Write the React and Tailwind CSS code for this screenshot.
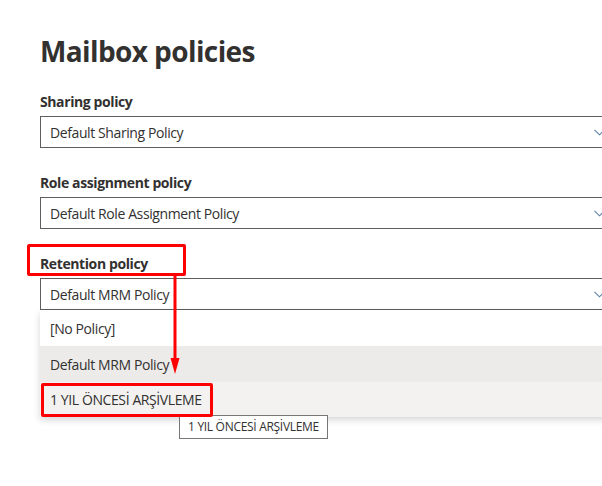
import React from 'react';

const font = { fontFamily: '"Open Sans", "Noto Sans", sans-serif' };

const Chevron = () => (
  <svg width="11" height="7" viewBox="0 0 11 7" fill="none" className="shrink-0">
    <path d="M0.5 0.8 L5.5 5.8 L10.5 0.8" stroke="#5b7fa6" strokeWidth="1.1" />
  </svg>
);

const Field = ({ label, value, first }) => (
  <div className={first ? 'mt-[23px]' : 'mt-[25px]'}>
    <div className="h-[20px] leading-[20px] text-[14px] font-bold tracking-[-0.4px] text-[#323130] mb-[4px]">{label}</div>
    <div className="w-[572px] h-[32px] border border-[#605e5c] flex items-center justify-between pl-[9px] pr-[6px]">
      <span className="text-[14px] tracking-[-0.4px] text-[#323130]">{value}</span>
      <Chevron />
    </div>
  </div>
);

export default function App() {
  return (
    <div className="relative w-[602px] h-[486px] overflow-hidden bg-white" style={font}>
      <div className="pl-[40px] pt-[33px]">
        <h1 className="text-[28px] leading-[36px] font-bold tracking-[-0.6px] text-[#323130]">Mailbox policies</h1>
        <Field first label="Sharing policy" value="Default Sharing Policy" />
        <Field label="Role assignment policy" value="Default Role Assignment Policy" />
        <Field label="Retention policy" value="Default MRM Policy" />

        {/* dropdown list */}
        <div className="w-[572px] bg-white shadow-[0_3px_7px_rgba(0,0,0,0.16)]">
          <div className="h-[36px] flex items-center pl-[10px] text-[14px] tracking-[-0.4px] text-[#323130]">[No Policy]</div>
          <div className="h-[36px] flex items-center pl-[10px] text-[14px] tracking-[-0.4px] text-[#323130] bg-[#edebe9]">Default MRM Policy</div>
          <div className="h-[35px] flex items-center pl-[10px] text-[14px] tracking-[-0.4px] text-[#323130] bg-[#f3f2f1]">1 YIL ÖNCESİ ARŞİVLEME</div>
        </div>
      </div>

      {/* tooltip */}
      <div className="absolute left-[179px] top-[415px] h-[24px] px-[8px] flex items-center bg-white border border-[#767676] text-[12px] tracking-[-0.3px] text-[#323130]">
        1 YIL ÖNCESİ ARŞİVLEME
      </div>

      {/* annotations */}
      <div className="absolute left-[27px] top-[244px] w-[159px] h-[32px] border-[3px] border-[#ff0000] rounded-[2px]" />
      <div className="absolute left-[41px] top-[383px] w-[172px] h-[34px] border-[3px] border-[#ff0000] rounded-[2px]" />
      <svg className="absolute left-[165px] top-[274px]" width="20" height="102" viewBox="0 0 20 102">
        <line x1="10" y1="0" x2="10" y2="86" stroke="#ff0000" strokeWidth="3" />
        <polygon points="5.5,84 14.5,84 10,100" fill="#ff0000" />
      </svg>
    </div>
  );
}
